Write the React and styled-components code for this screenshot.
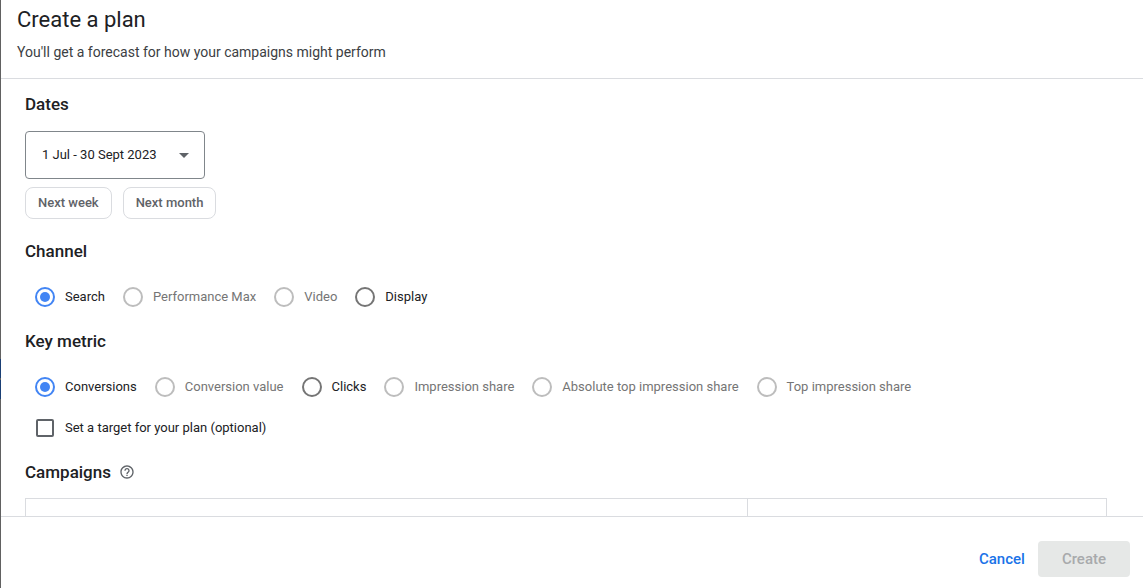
import React, { useState } from 'react';
import styled, { createGlobalStyle } from 'styled-components';

const GlobalStyle = createGlobalStyle`
  * {
    box-sizing: border-box;
  }

  body {
    margin: 0;
    background: #fff;
    color: #202124;
    font-family: Roboto, "Liberation Sans", sans-serif;
    font-size: 13px;
  }

  button, input, select {
    font: inherit;
    margin: 0;
  }
`;

const Panel = styled.div`
  display: flex;
  flex-direction: column;
  height: 100vh;
  padding-left: 1px;
  background: linear-gradient(#616161 359px, #1a3f75 359px 378px, #616161 378px 380px, #1a3f75 380px 399px, #616161 399px) left / 1px 100% no-repeat;
`;

const Header = styled.header`
  flex: none;
  padding: 6px 16px 16px;
  border-bottom: 1px solid #dadce0;
`;

const Title = styled.h1`
  margin: 0 0 8px;
  font-size: 22px;
  font-weight: 400;
  line-height: 28px;
`;

const Subtitle = styled.p`
  margin: 0;
  color: #3c4043;
  font-size: 14px;
  line-height: 20px;
`;

const Body = styled.main`
  flex: 1;
  min-height: 0;
  overflow: hidden;
  padding: 13px 36px 0 24px;
`;

const Heading = styled.h2`
  display: flex;
  align-items: center;
  gap: 8px;
  margin: 0;
  font-size: 17px;
  font-weight: 500;
  line-height: 24px;
`;

const Section = styled.section`
  margin-bottom: 20px;

  & + & {
    margin-bottom: 22px;
  }
`;

const DateField = styled.div`
  position: relative;
  width: 180px;
  margin-top: 15px;

  & svg {
    position: absolute;
    top: 22px;
    right: 16px;
    pointer-events: none;
  }
`;

const DateSelect = styled.select`
  appearance: none;
  display: block;
  width: 100%;
  height: 48px;
  padding: 0 40px 2px 16px;
  border: 1px solid #80868b;
  border-radius: 4px;
  background: #fff;
  color: #202124;
`;

const Chips = styled.div`
  display: flex;
  gap: 11px;
  margin-top: 8px;
`;

const Chip = styled.button`
  height: 32px;
  padding: 0 12px 2px;
  border: 1px solid #dadce0;
  border-radius: 8px;
  background: #fff;
  color: #5f6368;
  font-weight: 500;
  cursor: pointer;
`;

const Options = styled.div`
  display: flex;
  flex-wrap: wrap;
  gap: 18px;
  margin-top: 24px;
  padding-left: 10px;
`;

const Option = styled.label`
  display: flex;
  align-items: center;
  gap: 10px;
  line-height: 20px;
  color: ${({ $disabled }) => ($disabled ? '#757575' : '#202124')};
`;

const Radio = styled.input`
  appearance: none;
  flex: none;
  width: 20px;
  height: 20px;
  border: 2px solid #757575;
  border-radius: 50%;

  &:disabled {
    border-color: #bdbdbd;
  }

  &:checked {
    border-color: #4285f4;
    background: #4285f4;
    background-clip: content-box;
    padding: 3px;
  }
`;

const Checkbox = styled.input`
  appearance: none;
  flex: none;
  width: 18px;
  height: 18px;
  border: 2px solid #5f6368;
  border-radius: 2px;

  && {
    margin: 0 1px;
  }

  &:checked {
    background: #4285f4;
    border-color: #4285f4;
  }
`;

const Target = styled.div`
  margin-top: 21px;
  padding-left: 10px;
`;

const HelpButton = styled.button`
  display: flex;
  padding: 0;
  border: 0;
  background: none;
  color: #5f6368;
`;

const CampaignTable = styled.table`
  width: 100%;
  margin-top: 14px;
  border-collapse: collapse;
  table-layout: fixed;

  & th {
    height: 56px;
    border: 1px solid #dadce0;
  }

  & th:last-child {
    width: 33.2%;
  }
`;

const Footer = styled.footer`
  display: flex;
  flex: none;
  align-items: center;
  justify-content: flex-end;
  padding: 24px 13px 11px;
  border-top: 1px solid #dadce0;
`;

const Action = styled.button`
  height: 36px;
  padding: 0 ${({ $filled }) => ($filled ? 24 : 13)}px;
  border: 0;
  border-radius: 4px;
  background: ${({ $filled }) => ($filled ? '#e6e8e7' : 'transparent')};
  color: ${({ $filled }) => ($filled ? '#a8aaac' : '#1a73e8')};
  font-size: 15px;
  font-weight: 500;
`;

const channels = [
  { label: 'Search' },
  { label: 'Performance Max', disabled: true },
  { label: 'Video', disabled: true },
  { label: 'Display' },
];

const metrics = [
  { label: 'Conversions' },
  { label: 'Conversion value', disabled: true },
  { label: 'Clicks' },
  { label: 'Impression share', disabled: true },
  { label: 'Absolute top impression share', disabled: true },
  { label: 'Top impression share', disabled: true },
];

const RadioGroup = ({ name, options, value, onChange }) => (
  <Options role="radiogroup" aria-label={name}>
    {options.map(({ label, disabled }) => (
      <Option key={label} $disabled={disabled}>
        <Radio
          type="radio"
          name={name}
          disabled={disabled}
          checked={value === label}
          onChange={() => onChange(label)}
        />
        {label}
      </Option>
    ))}
  </Options>
);

const HelpIcon = () => (
  <svg width="16" height="16" viewBox="0 0 24 24" fill="currentColor">
    <path d="M11 18h2v-2h-2v2zm1-16C6.48 2 2 6.48 2 12s4.48 10 10 10 10-4.48 10-10S17.52 2 12 2zm0 18c-4.41 0-8-3.59-8-8s3.59-8 8-8 8 3.59 8 8-3.59 8-8 8zm0-14c-2.21 0-4 1.79-4 4h2c0-1.1.9-2 2-2s2 .9 2 2c0 2-3 1.75-3 5h2c0-2.25 3-2.5 3-5 0-2.21-1.79-4-4-4z" />
  </svg>
);

export default function App() {
  const [channel, setChannel] = useState('Search');
  const [metric, setMetric] = useState('Conversions');
  const [target, setTarget] = useState(false);

  return (
    <>
      <GlobalStyle />
      <Panel>
        <Header>
          <Title>Create a plan</Title>
          <Subtitle>You'll get a forecast for how your campaigns might perform</Subtitle>
        </Header>
        <Body>
          <Section>
            <Heading>Dates</Heading>
            <DateField>
              <DateSelect aria-label="Dates">
                <option>1 Jul - 30 Sept 2023</option>
              </DateSelect>
              <svg width="10" height="5" viewBox="0 0 10 5">
                <path d="M0 0h10L5 5z" fill="#5f6368" />
              </svg>
            </DateField>
            <Chips>
              <Chip>Next week</Chip>
              <Chip>Next month</Chip>
            </Chips>
          </Section>
          <Section>
            <Heading>Channel</Heading>
            <RadioGroup name="Channel" options={channels} value={channel} onChange={setChannel} />
          </Section>
          <Section>
            <Heading>Key metric</Heading>
            <RadioGroup name="Key metric" options={metrics} value={metric} onChange={setMetric} />
            <Target>
              <Option>
                <Checkbox type="checkbox" checked={target} onChange={(e) => setTarget(e.target.checked)} />
                Set a target for your plan (optional)
              </Option>
            </Target>
          </Section>
          <Heading>
            Campaigns
            <HelpButton aria-label="Help"><HelpIcon /></HelpButton>
          </Heading>
          <CampaignTable>
            <thead>
              <tr>
                <th />
                <th />
              </tr>
            </thead>
          </CampaignTable>
        </Body>
        <Footer>
          <Action>Cancel</Action>
          <Action $filled disabled>Create</Action>
        </Footer>
      </Panel>
    </>
  );
}
